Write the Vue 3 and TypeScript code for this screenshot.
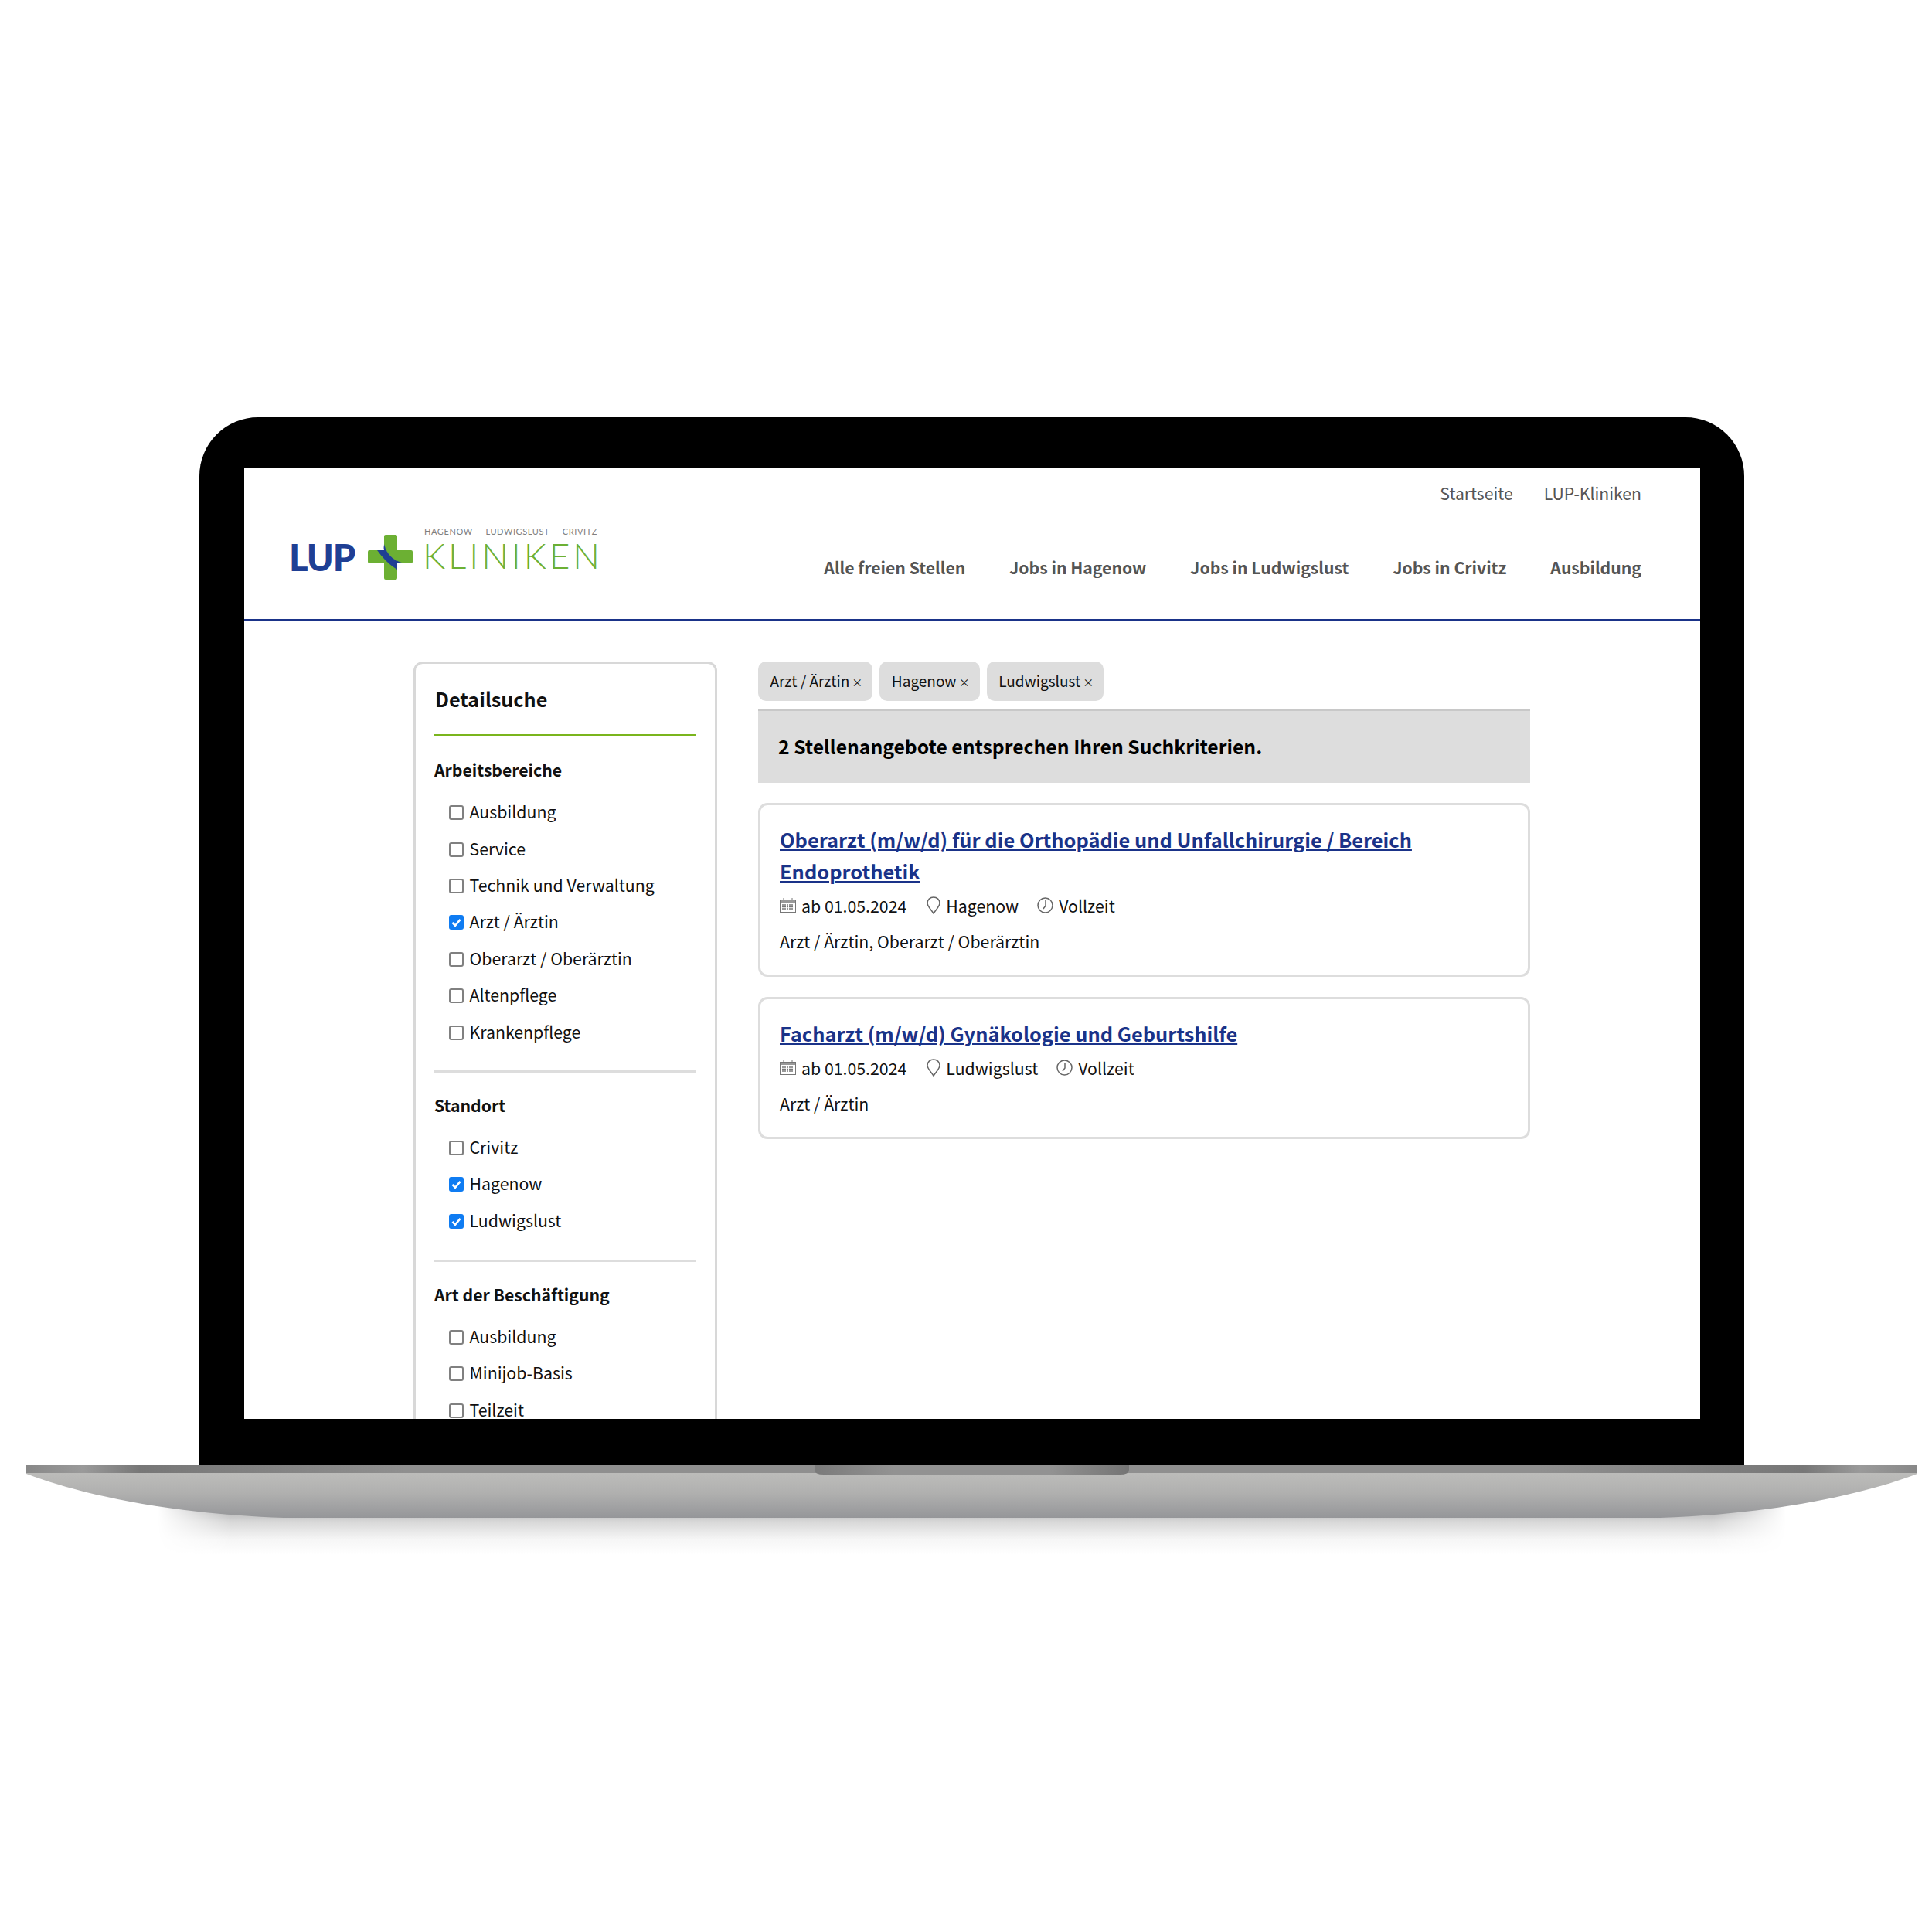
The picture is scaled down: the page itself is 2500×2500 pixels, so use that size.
<script setup lang="ts">
interface Option { label: string; checked?: boolean }
interface Group { title: string; options: Option[] }
interface Job { title: string[]; date: string; place: string; time: string; cats: string }

const nav: string[] = ['Alle freien Stellen', 'Jobs in Hagenow', 'Jobs in Ludwigslust', 'Jobs in Crivitz', 'Ausbildung']
const tags: string[] = ['Arzt / Ärztin', 'Hagenow', 'Ludwigslust']
const groups: Group[] = [
  { title: 'Arbeitsbereiche', options: [
    { label: 'Ausbildung' }, { label: 'Service' }, { label: 'Technik und Verwaltung' },
    { label: 'Arzt / Ärztin', checked: true }, { label: 'Oberarzt / Oberärztin' },
    { label: 'Altenpflege' }, { label: 'Krankenpflege' } ] },
  { title: 'Standort', options: [
    { label: 'Crivitz' }, { label: 'Hagenow', checked: true }, { label: 'Ludwigslust', checked: true } ] },
  { title: 'Art der Beschäftigung', options: [
    { label: 'Ausbildung' }, { label: 'Minijob-Basis' }, { label: 'Teilzeit' } ] },
]
const jobs: Job[] = [
  { title: ['Oberarzt (m/w/d) für die Orthopädie und Unfallchirurgie / Bereich', 'Endoprothetik'], date: 'ab 01.05.2024', place: 'Hagenow', time: 'Vollzeit', cats: 'Arzt / Ärztin, Oberarzt / Oberärztin' },
  { title: ['Facharzt (m/w/d) Gynäkologie und Geburtshilfe'], date: 'ab 01.05.2024', place: 'Ludwigslust', time: 'Vollzeit', cats: 'Arzt / Ärztin' },
]
</script>

<template>
  <div class="page">
    <div class="laptop">
      <div class="bezel">
        <div class="screen">
          <header class="header">
            <div class="logo">
              <span class="lup">LUP</span>
              <svg class="cross" width="58" height="58" viewBox="0 0 58 58">
                <path fill="#6cb033" d="M21 2a2 2 0 0 1 2-2h13a2 2 0 0 1 2 2v18h18a2 2 0 0 1 2 2v13a2 2 0 0 1-2 2H38v19a2 2 0 0 1-2 2H23a2 2 0 0 1-2-2V37H2a2 2 0 0 1-2-2V22a2 2 0 0 1 2-2h19z"/>
                <path fill="#fff" d="M20 12 C24 24 32 34 46 37 L38 40 L20 24z"/>
                <path fill="#1f3f94" d="M12 20 L21 20 C20 17 21 15 21 12 C24 24 32 33 44 36 L38 36 L38 45 C28 39 19 30 12 20z"/>
              </svg>
              <div class="brand">
                <div class="sites"><span>HAGENOW</span><span>LUDWIGSLUST</span><span>CRIVITZ</span></div>
                <div class="kliniken">KLINIKEN</div>
              </div>
            </div>
            <div class="header-right">
              <div class="toplinks"><a>Startseite</a><i></i><a>LUP-Kliniken</a></div>
              <nav class="nav"><a v-for="n in nav" :key="n">{{ n }}</a></nav>
            </div>
          </header>
          <div class="content">
            <aside class="sidebar">
              <h2>Detailsuche</h2>
              <section v-for="g in groups" :key="g.title" class="group">
                <h3>{{ g.title }}</h3>
                <label v-for="o in g.options" :key="o.label" class="opt">
                  <span class="box" :class="{ on: o.checked }">
                    <svg v-if="o.checked" width="19" height="19" viewBox="0 0 18 18"><path d="M4.200 9.400 7.600 13 13.800 5.600" fill="none" stroke="#fff" stroke-width="2.400"/></svg>
                  </span>
                  {{ o.label }}
                </label>
              </section>
            </aside>
            <main class="main">
              <div class="tags"><span v-for="t in tags" :key="t" class="tag">{{ t }}<small>×</small></span></div>
              <div class="result">2 Stellenangebote entsprechen Ihren Suchkriterien.</div>
              <article v-for="j in jobs" :key="j.date + j.place" class="card">
                <a class="title"><template v-for="(l, i) in j.title" :key="l"><br v-if="i" />{{ l }}</template></a>
                <div class="meta">
                  <svg width="21" height="19" viewBox="0 0 21 19" fill="none" stroke="#777"><rect x=".5" y="2.500" width="20" height="16"/><rect x="1" y="3" width="19" height="3" fill="#999" stroke="none"/><path d="M5 0v3M16 0v3"/><path d="M3 9h15M3 11.500h15M3 14h15" stroke-dasharray="2 1" stroke-width="1.500"/></svg>
                  <span>{{ j.date }}</span>
                  <svg class="pin" width="18" height="23" viewBox="0 0 18 23" fill="none" stroke="#666" stroke-width="1.500"><path d="M9 22C6 17 1 13 1 8.500a8 7.600 0 0 1 16 0c0 4.500-5 8.500-8 13.500z"/></svg>
                  <span>{{ j.place }}</span>
                  <svg class="clock" width="21" height="21" viewBox="0 0 21 21" fill="none" stroke="#666" stroke-width="1.500"><circle cx="10.500" cy="10.500" r="9.500"/><path d="M11 4v7l-3 4"/></svg>
                  <span>{{ j.time }}</span>
                </div>
                <div class="cats">{{ j.cats }}</div>
              </article>
            </main>
          </div>
        </div>
      </div>
      <svg class="base" width="2447" height="130" viewBox="0 0 2447 130">
        <defs>
          <linearGradient id="body" x1="0" y1="0" x2="0" y2="1"><stop offset="0" stop-color="#bcbcba"/><stop offset=".45" stop-color="#b0b0af"/><stop offset="1" stop-color="#959699"/></linearGradient>
          <linearGradient id="strip" x1="0" y1="0" x2="1" y2="0">
            <stop offset="0" stop-color="#888"/><stop offset=".03" stop-color="#9a9a9a"/><stop offset=".06" stop-color="#777"/><stop offset=".2" stop-color="#8f8f8f"/><stop offset=".8" stop-color="#8f8f8f"/><stop offset=".94" stop-color="#777"/><stop offset=".97" stop-color="#9a9a9a"/><stop offset="1" stop-color="#888"/>
          </linearGradient>
          <linearGradient id="notch" x1="0" y1="0" x2="1" y2="0"><stop offset="0" stop-color="#7a7a7a"/><stop offset=".25" stop-color="#929292"/><stop offset=".75" stop-color="#929292"/><stop offset="1" stop-color="#747474"/></linearGradient>
          <linearGradient id="sh" x1="0" y1="0" x2="0" y2="1"><stop offset="0" stop-color="#a0a0a2"/><stop offset=".35" stop-color="#d8d8d8"/><stop offset=".7" stop-color="#f6f6f6"/><stop offset="1" stop-color="#fff"/></linearGradient>
          <linearGradient id="fade" x1="0" y1="0" x2="1" y2="0"><stop offset="0" stop-color="#000"/><stop offset=".045" stop-color="#fff"/><stop offset=".955" stop-color="#fff"/><stop offset="1" stop-color="#000"/></linearGradient>
          <mask id="sides" maskUnits="userSpaceOnUse" x="0" y="0" width="2447" height="130"><rect x="170" y="0" width="2107" height="130" fill="url(#fade)"/></mask>
        </defs>
        <g mask="url(#sides)"><rect x="170" y="50" width="2107" height="66" fill="url(#sh)"/></g>
        <path fill="url(#body)" d="M0 10H2447V11C2387 34 2277 62 2114 68H333C170 62 60 34 0 11z"/>
        <rect width="2447" height="10" fill="url(#strip)"/>
        <path fill="url(#notch)" d="M1020 0H1427V6Q1427 12 1415 12H1032Q1020 12 1020 6z"/>
      </svg>
    </div>
  </div>
</template>

<style scoped>
.page { width: 2500px; height: 2500px; padding-top: 540px; box-sizing: border-box; background: #fff; font-family: "Noto Sans CJK SC", "Noto Sans", sans-serif; color: #111; }
.laptop { display: flex; flex-direction: column; align-items: center; margin-left: 15px; }
.bezel { width: 1999px; height: 1356px; box-sizing: border-box; padding: 65px 57px 60px 58px; background: #000; border-radius: 76px 76px 0 0; }
.screen { width: 1884px; height: 1231px; background: #fff; overflow: hidden; }
.base { display: block; }

.header { height: 196px; border-bottom: 3px solid #1a3389; display: flex; justify-content: space-between; padding: 0 76px 0 60px; }
.logo { display: flex; align-items: flex-start; padding-top: 87px; }
.lup { font: 900 47px/1 Lato, sans-serif; color: #1f3f94; margin-top: 6px; margin-left: -2px; width: 102px; letter-spacing: -1px; }
.cross { flex: none; }
.brand { margin-left: 15px; margin-top: -11px; width: 224px; }
.sites { display: flex; justify-content: space-between; font: 400 11px/14px Lato, sans-serif; color: #808080; letter-spacing: .6px; }
.kliniken { font: 300 46px/48px Lato, sans-serif; color: #6cb033; letter-spacing: 3.9px; white-space: nowrap; margin-left: -2px; }
.header-right { display: flex; flex-direction: column; align-items: flex-end; }
.toplinks { display: flex; align-items: center; height: 30px; margin-top: 17px; font-size: 21.2px; color: #555; }
.toplinks i { width: 1px; height: 30px; background: #ccc; margin: 0 19px 0 20px; }
.nav { display: flex; gap: 57px; margin-top: 67px; font-size: 21.2px; font-weight: 700; color: #555; line-height: 30px; }

.content { display: flex; gap: 53px; padding: 52px 0 0 219px; align-items: flex-start; }
.sidebar { width: 393px; box-sizing: border-box; border: 3px solid #d8d8d8; border-radius: 12px; padding: 0 24px; flex: none; }
.sidebar h2 { margin: 0; font-size: 25.2px; font-weight: 700; line-height: 40px; padding: 25px 0 26px 1px; border-bottom: 3px solid #7ab51d; }
.group { padding: 22px 0 28px; border-bottom: 3px solid #ddd; }
.group:first-of-type { padding: 23px 0 27px; }
.group h3 { margin: 0 0 10px; font-size: 21.2px; font-weight: 700; line-height: 40px; }
.opt { display: flex; align-items: center; height: 47.4px; padding-left: 18.5px; font-size: 21.3px; gap: 8px; }
.box { width: 19px; height: 19px; box-sizing: border-box; border: 2px solid #808080; border-radius: 3px; background: #fff; flex: none; position: relative; top: 2px; }
.box.on { border: 0; background: #0f7cf2; }
.box svg { display: block; }

.main { width: 999px; flex: none; }
.tags { display: flex; gap: 9px; }
.tag { height: 51px; line-height: 49px; padding: 0 13px 0 15.5px; background: #ddd; border-radius: 10px; font-size: 19px; }
.tag small { font-size: 14px; margin-left: 3px; vertical-align: 1.5px; }
.result { margin: 11px 0 26px; height: 95px; box-sizing: border-box; border-top: 2px solid #c8c8c8; background: #ddd; padding-left: 26px; line-height: 91px; font-size: 24.7px; font-weight: 700; color: #000; }
.card { margin-bottom: 26px; border: 3px solid #ddd; border-radius: 12px; padding: 24px 25px 28px; }
.title { display: block; font-size: 25.4px; line-height: 41px; font-weight: 700; color: #1a3389; text-decoration: underline; }
.meta { display: flex; align-items: center; height: 30px; margin-top: 8px; font-size: 21.3px; gap: 7px; }
.meta .pin { margin: 0 0 0 19px; }
.meta .clock { margin-left: 17px; }
.cats { margin-top: 17px; font-size: 21.3px; line-height: 30px; }
</style>
